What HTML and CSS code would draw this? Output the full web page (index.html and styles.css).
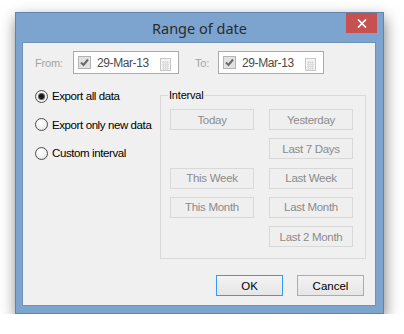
FILE: index.html
```html
<!DOCTYPE html>
<html lang="en">
<head>
  <meta charset="UTF-8">
  <meta name="viewport" content="width=device-width, initial-scale=1.0">
  <title>Range of date</title>
  <link rel="stylesheet" href="styles.css">
</head>
<body>
  <div class="window">
    <div class="titlebar">
      <span class="title">Range of date</span>
      <button class="close" type="button">
        <svg width="10" height="9" viewBox="0 0 10 9"><path d="M1 0.5 L9 8.5 M9 0.5 L1 8.5" stroke="#fff" stroke-width="1.7"/></svg>
      </button>
    </div>

    <div class="client">
      <div class="date-row">
        <span class="date-label">From:</span>
        <div class="date-box">
          <span class="check">
            <svg width="11" height="11" viewBox="0 0 11 11"><path d="M2 5.5 L4.5 8 L9 2.5" fill="none" stroke="#6a6a6a" stroke-width="2"/></svg>
          </span>
          <span class="date-text">29-Mar-13</span>
          <svg class="cal" width="11" height="13" viewBox="0 0 11 13">
            <rect x="0.5" y="0.5" width="10" height="12" fill="#f4f4f4" stroke="#c8c8c8"/>
            <path d="M2 4.5 H9 M2 6.5 H9 M2 8.5 H9 M2 10.5 H9 M3.5 3 V12 M5.5 3 V12 M7.5 3 V12" stroke="#dcdcdc"/>
          </svg>
        </div>
        <span class="date-label to">To:</span>
        <div class="date-box">
          <span class="check">
            <svg width="11" height="11" viewBox="0 0 11 11"><path d="M2 5.5 L4.5 8 L9 2.5" fill="none" stroke="#6a6a6a" stroke-width="2"/></svg>
          </span>
          <span class="date-text">29-Mar-13</span>
          <svg class="cal" width="11" height="13" viewBox="0 0 11 13">
            <rect x="0.5" y="0.5" width="10" height="12" fill="#f4f4f4" stroke="#c8c8c8"/>
            <path d="M2 4.5 H9 M2 6.5 H9 M2 8.5 H9 M2 10.5 H9 M3.5 3 V12 M5.5 3 V12 M7.5 3 V12" stroke="#dcdcdc"/>
          </svg>
        </div>
      </div>

      <div class="main">
        <div class="radios">
          <label class="radio"><span class="circle checked"></span>Export all data</label>
          <label class="radio"><span class="circle"></span>Export only new data</label>
          <label class="radio"><span class="circle"></span>Custom interval</label>
        </div>

        <fieldset class="interval">
          <legend>Interval</legend>
          <div class="quick-grid">
            <button class="quick" type="button" disabled>Today</button>
            <button class="quick" type="button" disabled>Yesterday</button>
            <span></span>
            <button class="quick" type="button" disabled>Last 7 Days</button>
            <button class="quick" type="button" disabled>This Week</button>
            <button class="quick" type="button" disabled>Last Week</button>
            <button class="quick" type="button" disabled>This Month</button>
            <button class="quick" type="button" disabled>Last Month</button>
            <span></span>
            <button class="quick" type="button" disabled>Last 2 Month</button>
          </div>
        </fieldset>
      </div>

      <div class="actions">
        <button class="btn default" type="button">OK</button>
        <button class="btn" type="button">Cancel</button>
      </div>
    </div>
  </div>
</body>
</html>
```

FILE: styles.css
```css
body {
  margin: 0;
  padding: 12px 0 0 15px;
  background: #fff;
  font-family: "Liberation Sans", Arial, sans-serif;
  font-size: 11px;
}
.window {
  width: 369px;
  box-sizing: border-box;
  background: #7ca4ce;
  border: 1px solid #5f83aa;
  padding: 0 7px 7px 6px;
  box-shadow: 1px 6px 14px rgba(0, 0, 0, 0.5);
}
.titlebar {
  display: grid;
  grid-template-columns: 1fr auto 1fr;
  height: 29px;
  margin-right: -1px;
}
.title {
  grid-column: 2;
  align-self: center;
  font-family: "Noto Sans", "Open Sans", sans-serif;
  font-size: 14.5px;
  color: #2b2b2b;
}
.close {
  grid-column: 3;
  justify-self: end;
  align-self: start;
  width: 31px;
  height: 20px;
  border: none;
  padding: 0;
  background: #c75050;
  display: flex;
  align-items: center;
  justify-content: center;
}
.client {
  height: 264px;
  box-sizing: border-box;
  background: #f0f0f0;
  border: 1px solid #6f92ba;
  padding: 8px 9px 0 12px;
  letter-spacing: -0.2px;
}
.date-row {
  display: flex;
  align-items: center;
  height: 23px;
}
.date-label {
  width: 38px;
  color: #a3a3a3;
}
.date-label.to {
  width: 23px;
  margin-left: 16px;
}
.date-box {
  width: 106px;
  height: 23px;
  box-sizing: border-box;
  border: 1px solid #ababab;
  background: #fff;
  display: flex;
  align-items: center;
  padding-left: 4px;
}
.check {
  width: 11px;
  height: 11px;
  border: 1px solid #b4b4b4;
  background: #e2e2e2;
  display: flex;
}
.date-text {
  margin-left: 6px;
  color: #4a4a4a;
  font-size: 12px;
  letter-spacing: -0.4px;
  width: 63px;
}
.cal {
  margin-top: 3px;
}
.main {
  display: flex;
  margin-top: 15px;
}
.radios {
  width: 125px;
  display: flex;
  flex-direction: column;
  gap: 14.5px;
}
.radio {
  display: flex;
  align-items: center;
  height: 14px;
  color: #000;
  font-size: 11.5px;
  letter-spacing: -0.4px;
}
.circle {
  width: 11px;
  height: 11px;
  border: 1px solid #4d4d4d;
  border-radius: 50%;
  background: radial-gradient(circle at 40% 35%, #fff 0, #f2f2f2 50%, #d8d8d8 100%);
  margin-right: 4px;
}
.circle.checked {
  background: radial-gradient(circle, #111 0, #222 2.5px, #999 3.5px, #f4f4f4 4px, #dedede 100%);
}
.interval {
  width: 206px;
  box-sizing: border-box;
  margin: 0;
  padding: 7px 12px 11px 9px;
  border: 1px solid #d9d9d9;
  min-width: 0;
}
.interval legend {
  padding: 0 1px;
  margin-left: -2px;
  line-height: 13px;
  color: #000;
}
.quick-grid {
  display: grid;
  grid-template-columns: 84px 84px;
  grid-auto-rows: 21px;
  column-gap: 15px;
  row-gap: 8.25px;
}
.quick {
  font: inherit;
  font-size: 11.5px;
  letter-spacing: -0.3px;
  background: #efefef;
  border: 1px solid #d8d8d8;
  color: #8b8b8b;
  padding: 0;
}
.actions {
  display: flex;
  justify-content: flex-end;
  gap: 14px;
  margin-top: 16px;
  margin-right: 2px;
}
.btn {
  width: 67px;
  height: 21px;
  font: inherit;
  font-size: 11.5px;
  color: #000;
  background: linear-gradient(#f3f3f3, #e6e6e6);
  border: 1px solid #acacac;
  padding: 0;
}
.btn.default {
  border-color: #3399ff;
}
```
